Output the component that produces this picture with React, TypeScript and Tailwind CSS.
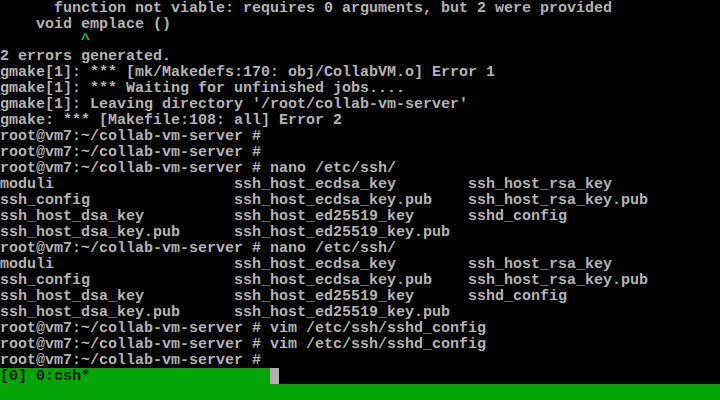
import React from 'react';

const lines: string[] = [
  '      function not viable: requires 0 arguments, but 2 were provided',
  '    void emplace ()',
  '',
  '2 errors generated.',
  'gmake[1]: *** [mk/Makedefs:170: obj/CollabVM.o] Error 1',
  'gmake[1]: *** Waiting for unfinished jobs....',
  "gmake[1]: Leaving directory '/root/collab-vm-server'",
  'gmake: *** [Makefile:108: all] Error 2',
  'root@vm7:~/collab-vm-server #',
  'root@vm7:~/collab-vm-server #',
  'root@vm7:~/collab-vm-server # nano /etc/ssh/',
  'moduli                    ssh_host_ecdsa_key        ssh_host_rsa_key',
  'ssh_config                ssh_host_ecdsa_key.pub    ssh_host_rsa_key.pub',
  'ssh_host_dsa_key          ssh_host_ed25519_key      sshd_config',
  'ssh_host_dsa_key.pub      ssh_host_ed25519_key.pub',
  'root@vm7:~/collab-vm-server # nano /etc/ssh/',
  'moduli                    ssh_host_ecdsa_key        ssh_host_rsa_key',
  'ssh_config                ssh_host_ecdsa_key.pub    ssh_host_rsa_key.pub',
  'ssh_host_dsa_key          ssh_host_ed25519_key      sshd_config',
  'ssh_host_dsa_key.pub      ssh_host_ed25519_key.pub',
  'root@vm7:~/collab-vm-server # vim /etc/ssh/sshd_config',
  'root@vm7:~/collab-vm-server # vim /etc/ssh/sshd_config',
  'root@vm7:~/collab-vm-server #',
];

export default function App() {
  return (
    <div className="w-[720px] h-[400px] bg-black overflow-hidden font-['Liberation_Mono',monospace] font-bold text-[15px] leading-4 text-[#b4b4b4]">
      {lines.map((line, i) => (
        <div key={i} className="h-4 whitespace-pre pt-px">
          {i === 2 ? <span className="text-[#2fbf2f]">{'         ^'}</span> : line}
        </div>
      ))}

      {/* tmux status line */}
      <div className="flex h-4">
        <div className="w-[270px] bg-[#05a505] text-[#0a1a0a] whitespace-pre pt-px">[0] 0:csh*</div>
        <div className="w-[9px] bg-[#b0b0b0]" />
        <div className="flex-1 bg-black" />
      </div>
      <div className="h-4 bg-[#05a505]" />
    </div>
  );
}
